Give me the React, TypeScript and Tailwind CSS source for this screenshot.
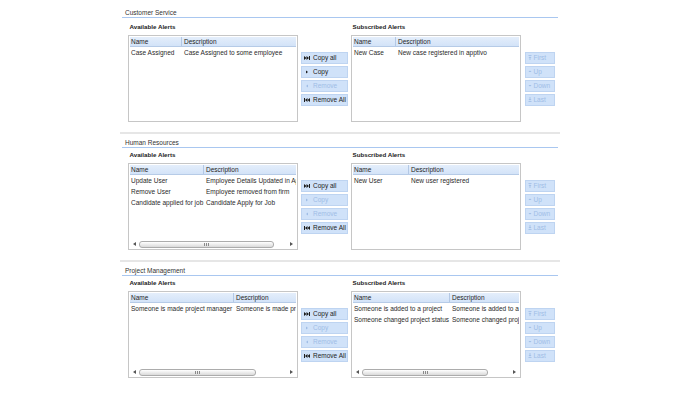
import React from "react";

type Row = { name: string; desc: string };

type Side = {
  nameW: string;
  rows: Row[];
  thumbW?: string;
};

type SectionData = {
  title: string;
  first?: boolean;
  copyOn: boolean;
  left: Side;
  right: Side;
};

const sections: SectionData[] = [
  {
    title: "Customer Service",
    first: true,
    copyOn: true,
    left: {
      nameW: "w-[52px]",
      rows: [{ name: "Case Assigned", desc: "Case Assigned to some employee" }],
    },
    right: {
      nameW: "w-[43px]",
      rows: [{ name: "New Case", desc: "New case registered in apptivo" }],
    },
  },
  {
    title: "Human Resources",
    copyOn: false,
    left: {
      nameW: "w-[74px]",
      thumbW: "w-[135px]",
      rows: [
        { name: "Update User", desc: "Employee Details Updated in Apptivo" },
        { name: "Remove User", desc: "Employee removed from firm" },
        { name: "Candidate applied for job", desc: "Candidate Apply for Job" },
      ],
    },
    right: {
      nameW: "w-[56px]",
      rows: [{ name: "New User", desc: "New user registered" }],
    },
  },
  {
    title: "Project Management",
    copyOn: false,
    left: {
      nameW: "w-[104px]",
      thumbW: "w-[117px]",
      rows: [{ name: "Someone is made project manager", desc: "Someone is made project manager" }],
    },
    right: {
      nameW: "w-[97px]",
      thumbW: "w-[126px]",
      rows: [
        { name: "Someone is added to a project", desc: "Someone is added to a project" },
        { name: "Someone changed project status", desc: "Someone changed project status" },
      ],
    },
  },
];

// tiny glyphs used on the move buttons
const Icon = ({ kind }: { kind: string }) => {
  switch (kind) {
    case "all":
      return (
        <svg width="6" height="4" viewBox="0 0 6 4" fill="currentColor">
          <polygon points="0,0 2.5,2 0,4" />
          <polygon points="2.5,0 5,2 2.5,4" />
          <rect x="5" y="0" width="1" height="4" />
        </svg>
      );
    case "back":
      return (
        <svg width="6" height="4" viewBox="0 0 6 4" fill="currentColor">
          <rect x="0" y="0" width="1" height="4" />
          <polygon points="3.5,0 1,2 3.5,4" />
          <polygon points="6,0 3.5,2 6,4" />
        </svg>
      );
    case "right":
      return (
        <svg width="6" height="4" viewBox="0 0 6 4" fill="currentColor">
          <polygon points="2,0.5 4,2 2,3.5" />
        </svg>
      );
    case "left":
      return (
        <svg width="6" height="4" viewBox="0 0 6 4" fill="currentColor">
          <polygon points="4,0.5 2,2 4,3.5" />
        </svg>
      );
    case "first":
      return (
        <svg width="4" height="5" viewBox="0 0 4 5" fill="currentColor">
          <rect x="0.5" y="0" width="3" height="0.8" />
          <polygon points="0.5,3 2,1.5 3.5,3" />
          <rect x="1.6" y="3" width="0.8" height="2" />
        </svg>
      );
    case "up":
      return (
        <svg width="4" height="5" viewBox="0 0 4 5" fill="currentColor">
          <polygon points="0.5,3 2,1.5 3.5,3" />
        </svg>
      );
    case "down":
      return (
        <svg width="4" height="5" viewBox="0 0 4 5" fill="currentColor">
          <polygon points="0.5,2 2,3.5 3.5,2" />
        </svg>
      );
    default:
      return (
        <svg width="4" height="5" viewBox="0 0 4 5" fill="currentColor">
          <rect x="1.6" y="0" width="0.8" height="2" />
          <polygon points="0.5,2 2,3.5 3.5,2" />
          <rect x="0.5" y="4.2" width="3" height="0.8" />
        </svg>
      );
  }
};

const Btn = ({ icon, label, on, wide }: { icon: string; label: string; on: boolean; wide?: boolean }) => (
  <div
    className={`flex h-[12px] items-center border border-[#bed4f1] bg-[#d0e2f9] ${
      wide ? "w-[47px] gap-[3px] pl-[2px]" : "w-[30px] gap-[1.5px] pl-[2px]"
    } ${on ? "text-[#1c1c1c]" : "text-[#9fbde6]"}`}
  >
    <Icon kind={icon} />
    <span className="whitespace-nowrap leading-[10px]">{label}</span>
  </div>
);

const HScroll = ({ thumbW }: { thumbW: string }) => (
  <div className="flex h-[8px] shrink-0 items-center">
    <div className="flex w-[9px] justify-center">
      <svg width="3" height="4" viewBox="0 0 3 4">
        <polygon points="3,0 0,2 3,4" fill="#555" />
      </svg>
    </div>
    <div className="flex h-full flex-1 items-center">
      <div
        className={`flex h-[7px] items-center justify-center gap-px rounded-[3px] border border-[#acacac] bg-gradient-to-b from-white to-[#dadada] ${thumbW}`}
      >
        <span className="h-[3px] w-px bg-[#8a8a8a]" />
        <span className="h-[3px] w-px bg-[#8a8a8a]" />
        <span className="h-[3px] w-px bg-[#8a8a8a]" />
      </div>
    </div>
    <div className="flex w-[9px] justify-center">
      <svg width="3" height="4" viewBox="0 0 3 4">
        <polygon points="0,0 3,2 0,4" fill="#555" />
      </svg>
    </div>
  </div>
);

const Table = ({ side }: { side: Side }) => (
  <div className="flex h-[87px] w-[170px] shrink-0 flex-col overflow-hidden border border-[#c6c6c6] bg-white p-px">
    <div className="min-h-0 flex-1 overflow-hidden">
      <div className="flex h-[10px] w-full border-b border-[#b6cbe7] bg-gradient-to-b from-[#e4eefb] to-[#d3e3f8] leading-[9px] text-[#1e1e1e]">
        <div className={`shrink-0 border-r border-[#b3c8e5] pl-px ${side.nameW}`}>Name</div>
        <div className="flex-1 whitespace-nowrap pl-[2px]">Description</div>
      </div>
      {side.rows.map((r) => (
        <div key={r.name} className="flex leading-[11px] text-[#2a2a2a]">
          <div className={`shrink-0 overflow-hidden whitespace-nowrap pl-px pr-px ${side.nameW}`}>{r.name}</div>
          <div className="shrink-0 whitespace-nowrap pl-[2px]">{r.desc}</div>
        </div>
      ))}
    </div>
    {side.thumbW && <HScroll thumbW={side.thumbW} />}
  </div>
);

const Section = ({ s }: { s: SectionData }) => (
  <div className="flex h-[128px] flex-col">
    <div className={s.first ? "h-[2px]" : "h-[2px] bg-[#e6e6e6]"} />
    <div className={`ml-[2px] w-[436px] pl-[3px] leading-[8px] text-[#333] ${s.first ? "mt-[3px]" : "mt-[5px]"}`}>
      {s.title}
    </div>
    <div className="ml-[2px] h-px w-[436px] bg-[#a9c7f0]" />
    <div className={`flex gap-[3px] pl-[8px] leading-[8px] ${s.first ? "mt-[5px]" : "mt-[3px]"}`}>
      <div className="w-[170px] pl-[1.5px] text-[6.2px] font-bold text-[#222]">Available Alerts</div>
      <div className="w-[47px]" />
      <div className="w-[170px] pl-[1.5px] text-[6.2px] font-bold text-[#222]">Subscribed Alerts</div>
    </div>
    <div className="mt-[4px] flex items-center gap-[3px] pl-[8px]">
      <Table side={s.left} />
      <div className="flex flex-col gap-[2px]">
        <Btn wide icon="all" label="Copy all" on />
        <Btn wide icon="right" label="Copy" on={s.copyOn} />
        <Btn wide icon="left" label="Remove" on={false} />
        <Btn wide icon="back" label="Remove All" on />
      </div>
      <Table side={s.right} />
      <div className="ml-px flex flex-col gap-[2px]">
        <Btn icon="first" label="First" on={false} />
        <Btn icon="up" label="Up" on={false} />
        <Btn icon="down" label="Down" on={false} />
        <Btn icon="last" label="Last" on={false} />
      </div>
    </div>
  </div>
);

const App = () => {
  return (
    <div className="h-[394px] w-[700px] overflow-hidden bg-white pt-[4px] font-['Liberation_Sans',Arial,sans-serif] text-[6.5px]">
      <div className="ml-[120px] w-[440px]">
        {sections.map((s) => (
          <Section key={s.title} s={s} />
        ))}
      </div>
    </div>
  );
};

export default App;
